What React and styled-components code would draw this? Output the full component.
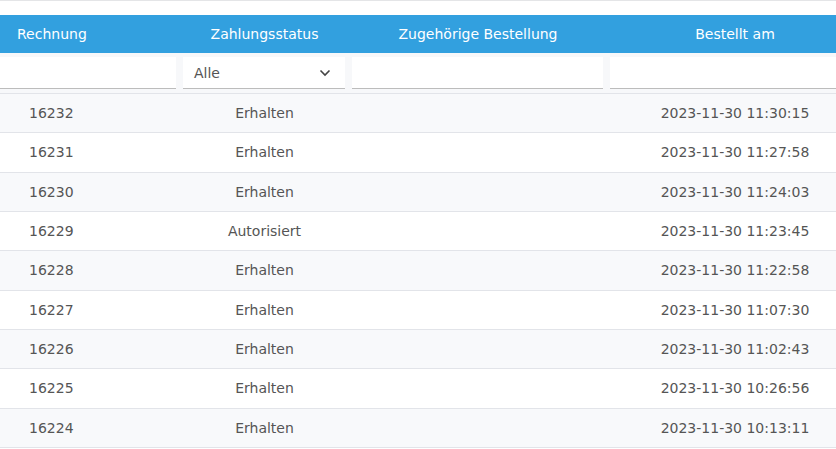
import React from 'react'
import styled, { createGlobalStyle } from 'styled-components'

const GlobalStyle = createGlobalStyle`
  html, body { margin: 0; padding: 0; background: #fff; overflow: hidden; }
  body { font-family: "DejaVu Sans", Verdana, sans-serif; font-size: 14px; color: #555; }
`

const cols = '180px 169px 258px 256px'

const rows = [
  ['16232', 'Erhalten', '2023-11-30 11:30:15'],
  ['16231', 'Erhalten', '2023-11-30 11:27:58'],
  ['16230', 'Erhalten', '2023-11-30 11:24:03'],
  ['16229', 'Autorisiert', '2023-11-30 11:23:45'],
  ['16228', 'Erhalten', '2023-11-30 11:22:58'],
  ['16227', 'Erhalten', '2023-11-30 11:07:30'],
  ['16226', 'Erhalten', '2023-11-30 11:02:43'],
  ['16225', 'Erhalten', '2023-11-30 10:26:56'],
  ['16224', 'Erhalten', '2023-11-30 10:13:11'],
]

function App() {
  return (
    <Page>
      <GlobalStyle />
      <Table>
        <HeadRow>
          <HeadCell $align="left">Rechnung</HeadCell>
          <HeadCell>Zahlungsstatus</HeadCell>
          <HeadCell>Zugehörige Bestellung</HeadCell>
          <HeadCell>Bestellt am</HeadCell>
        </HeadRow>
        <FilterRow>
          <FilterCell><TextInput /></FilterCell>
          <FilterCell>
            <Select>
              <span>Alle</span>
              <svg width="12" height="8" viewBox="0 0 12 8">
                <path d="M1.5 1.5 L6 6 L10.5 1.5" fill="none" stroke="#444" strokeWidth="1.6" />
              </svg>
            </Select>
          </FilterCell>
          <FilterCell><TextInput /></FilterCell>
          <FilterCell><TextInput /></FilterCell>
        </FilterRow>
        {rows.map((r, i) => (
          <Row key={r[0]} $striped={i % 2 === 0}>
            <Cell $align="left">{r[0]}</Cell>
            <Cell>{r[1]}</Cell>
            <Cell></Cell>
            <Cell>{r[2]}</Cell>
          </Row>
        ))}
      </Table>
    </Page>
  )
}

const Page = styled.div`
  width: 836px;
  height: 449px;
  overflow: hidden;
  border-top: 1px solid #e4e5e7;
  padding-top: 14px;
  box-sizing: border-box;
`

const Table = styled.div`
  width: 863px;
`

const HeadRow = styled.div`
  display: grid;
  grid-template-columns: ${cols};
  height: 38px;
  background: #32a0df;
  color: #fff;
`

const HeadCell = styled.div`
  display: flex;
  align-items: center;
  justify-content: ${p => (p.$align === 'left' ? 'flex-start' : 'center')};
  padding-left: ${p => (p.$align === 'left' ? '17px' : '0')};
  font-size: 14px;
`

const FilterRow = styled.div`
  display: grid;
  grid-template-columns: ${cols};
  height: 41px;
  box-sizing: border-box;
  background: #f7f8fa;
  border-bottom: 1px solid #e2e4e9;
  padding-top: 4px;
`

const FilterCell = styled.div`
  padding: 0 4px 0 3px;
  &:first-child { padding-left: 0; }
`

const TextInput = styled.div`
  height: 32px;
  box-sizing: border-box;
  background: #fff;
  border-bottom: 1px solid #bcbcbc;
`

const Select = styled(TextInput)`
  display: flex;
  align-items: center;
  justify-content: space-between;
  padding: 0 14px 0 11px;
  color: #555;
  font-size: 14px;
`

const Row = styled.div`
  display: grid;
  grid-template-columns: ${cols};
  height: 39.33px;
  box-sizing: border-box;
  background: ${p => (p.$striped ? '#f8f9fb' : '#fff')};
  border-bottom: 1px solid #e2e4e9;
`

const Cell = styled.div`
  display: flex;
  align-items: center;
  justify-content: ${p => (p.$align === 'left' ? 'flex-start' : 'center')};
  padding-left: ${p => (p.$align === 'left' ? '29px' : '0')};
  color: #555;
  font-size: 14px;
`

export default App
